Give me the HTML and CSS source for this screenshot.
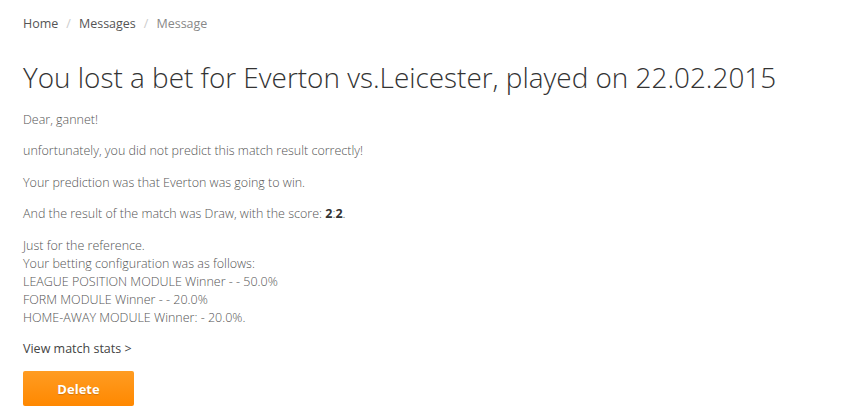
FILE: index.html
```html
<!DOCTYPE html>
<html>
<head>
<meta charset="utf-8">
<link rel="stylesheet" href="styles.css">
</head>
<body>
<div class="page">
  <nav class="crumbs">
    <a class="crumb" href="#">Home</a><span class="sep">/</span><a class="crumb" href="#">Messages</a><span class="sep">/</span><span class="crumb current">Message</span>
  </nav>
  <h1 class="title">You lost a bet for Everton vs.Leicester, played on 22.02.2015</h1>
  <div class="message">
    <p>Dear, gannet!</p>
    <p>unfortunately, you did not predict this match result correctly!</p>
    <p>Your prediction was that Everton was going to win.</p>
    <p>And the result of the match was Draw, with the score: <b>2</b>:<b>2</b>.</p>
    <p>Just for the reference.<br>Your betting configuration was as follows:<br>LEAGUE POSITION MODULE Winner - - 50.0%<br>FORM MODULE Winner - - 20.0%<br>HOME-AWAY MODULE Winner: - 20.0%.</p>
    <p><a class="stats" href="#">View match stats &gt;</a></p>
  </div>
  <button class="btn-delete">Delete</button>
</div>
</body>
</html>
```

FILE: styles.css
```css
html, body {
  margin: 0;
  padding: 0;
  background: #fff;
}
.page {
  padding: 15px 23px 0;
  font-family: "Open Sans", "Liberation Sans", sans-serif;
  color: #555;
}
.crumbs {
  font-size: 12.5px;
  line-height: 18px;
  display: flex;
  align-items: center;
}
.crumb {
  color: #555;
  text-decoration: none;
}
.crumb.current {
  color: #888;
}
.sep {
  color: #ccc;
  padding: 0 8px;
}
.title {
  margin: 26px 0 0;
  font-size: 27.9px;
  font-weight: 300;
  line-height: 36px;
  color: #333;
}
.message {
  margin-top: 16px;
  font-size: 12.5px;
  font-weight: 300;
  line-height: 18px;
  color: #555;
}
.message p {
  margin: 0 0 13.4px;
}
.message b {
  font-weight: 700;
  color: #333;
}
.stats {
  color: #444;
  font-weight: 400;
  text-decoration: none;
}
.btn-delete {
  display: block;
  margin-top: 1px;
  width: 111px;
  height: 35px;
  border: 0;
  border-radius: 2px;
  background: linear-gradient(#ff9c22, #ff8800);
  color: #fff;
  font-family: "Open Sans", "Liberation Sans", sans-serif;
  font-weight: 700;
  font-size: 13px;
  text-shadow: 0 1px 1px rgba(150, 80, 0, 0.4);
  cursor: pointer;
}
```
